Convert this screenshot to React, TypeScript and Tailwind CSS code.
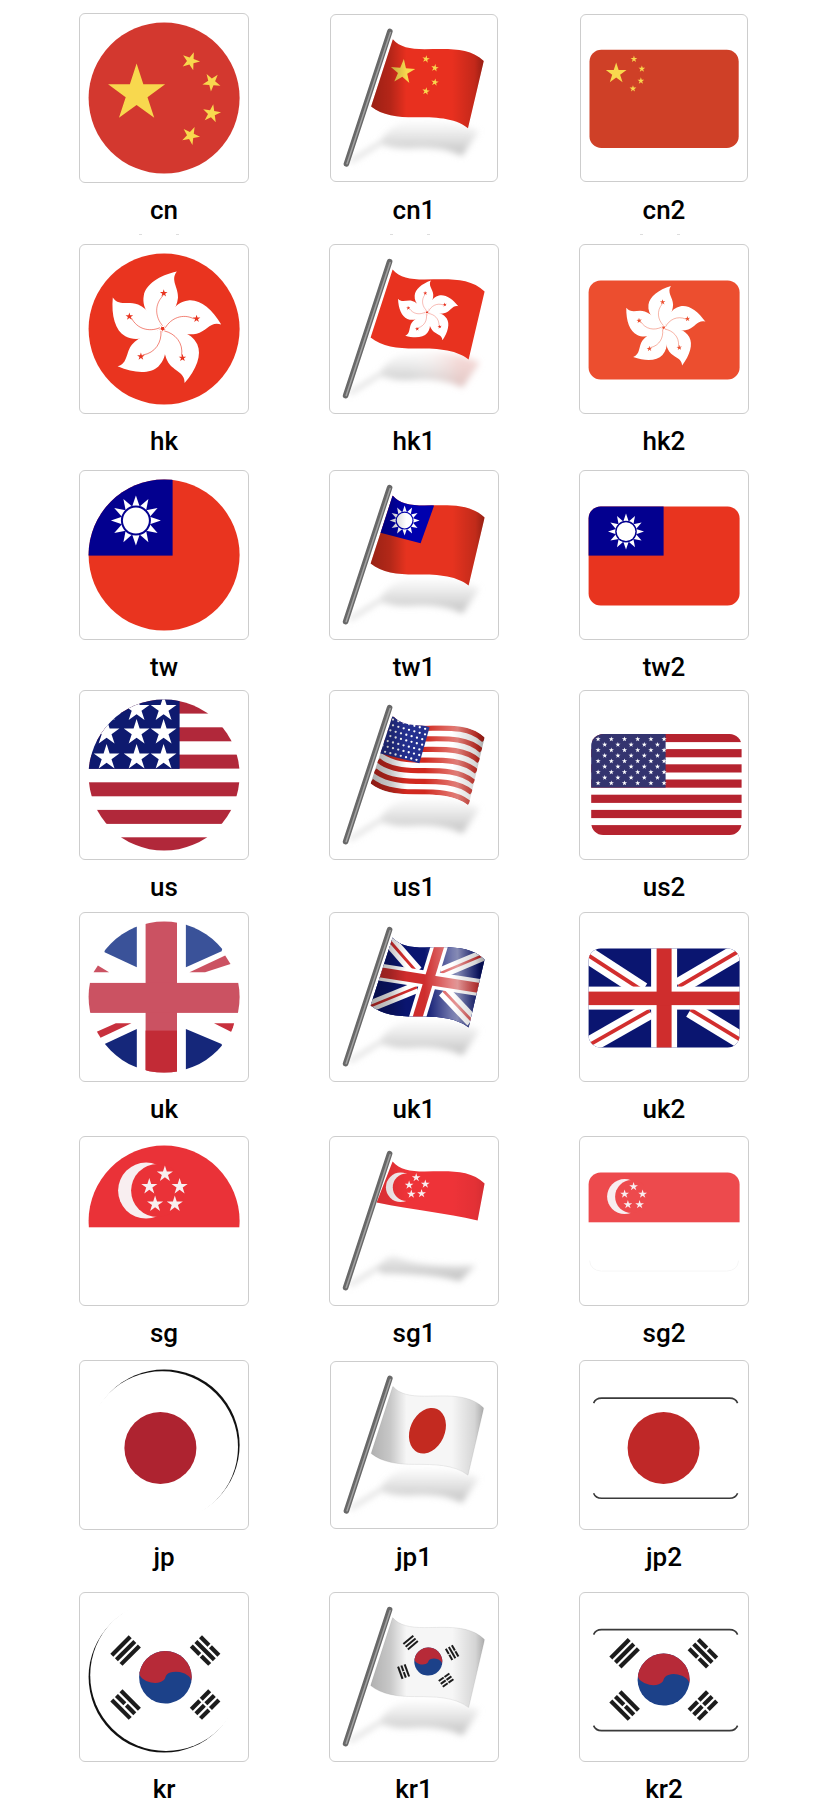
import React from "react";

type P = [number, number];

const starPts = (cx: number, cy: number, r: number, rot = 0) => {
  const out: string[] = [];
  for (let i = 0; i < 10; i++) {
    const rad = i % 2 === 0 ? r : r * 0.382;
    const a = ((rot + i * 36 - 90) * Math.PI) / 180;
    out.push(`${(cx + rad * Math.cos(a)).toFixed(2)},${(cy + rad * Math.sin(a)).toFixed(2)}`);
  }
  return out.join(" ");
};

const Star = ({ cx, cy, r, fill, rot = 0 }: { cx: number; cy: number; r: number; fill: string; rot?: number }) => (
  <polygon points={starPts(cx, cy, r, rot)} fill={fill} />
);

const Bauhinia = ({ cx, cy, r, bg, rot = 0 }: { cx: number; cy: number; r: number; bg: string; rot?: number }) => (
  <g transform={`translate(${cx} ${cy}) rotate(${rot}) scale(${r / 100})`}>
    {[0, 1, 2, 3, 4].map((i) => (
      <g key={i} transform={`rotate(${i * 72})`}>
        <path d="M-1 -3 C-16 -14 -38 -32 -33 -58 C-29 -78 -6 -93 25 -100 C13 -85 28 -72 27 -54 C25 -34 10 -18 3 -3 Z" fill="#fff" />
        <path d="M0 -5 C-13 -20 -15 -42 1 -58" fill="none" stroke={bg} strokeWidth="1.2" opacity="0.8" />
        <Star cx={2} cy={-62} r={7} fill={bg} />
      </g>
    ))}
  </g>
);

const Sun = ({ cx, cy, r, navy }: { cx: number; cy: number; r: number; navy: string }) => (
  <g transform={`translate(${cx} ${cy}) scale(${r})`}>
    {Array.from({ length: 12 }).map((_, i) => (
      <polygon key={i} transform={`rotate(${i * 30})`} points="-0.15,-0.56 0.15,-0.56 0,-1" fill="#fff" />
    ))}
    <circle r="0.6" fill={navy} />
    <circle r="0.52" fill="#fff" />
  </g>
);

const Taegeuk = ({ cx, cy, r, rot = 11 }: { cx: number; cy: number; r: number; rot?: number }) => (
  <g transform={`translate(${cx} ${cy}) rotate(${rot}) scale(${r})`}>
    <circle r="1" fill="#1c4189" />
    <path d="M-1 0 A1 1 0 0 1 1 0 A.5 .3 0 0 0 0 0 A.5 .3 0 0 1 -1 0 Z" fill="#b72a38" />
  </g>
);

const Trigram = ({ cx, cy, rot, pat, len, t, g }: { cx: number; cy: number; rot: number; pat: number[]; len: number; t: number; g: number }) => (
  <g transform={`translate(${cx} ${cy}) rotate(${rot})`} fill="#1c1c1c">
    {pat.map((full, i) => {
      const y = (i - 1) * (t + g) - t / 2;
      return full ? (
        <rect key={i} x={-len / 2} y={y} width={len} height={t} />
      ) : (
        <g key={i}>
          <rect x={-len / 2} y={y} width={len / 2 - t * 0.25} height={t} />
          <rect x={t * 0.25} y={y} width={len / 2 - t * 0.25} height={t} />
        </g>
      );
    })}
  </g>
);

const jackArms: [number, number, number, number][] = [
  [-6, 3, 54, 42],
  [90, 38, 158, -2],
  [-4, 99, 61, 62],
  [102, 61, 158, 95],
];

const UnionJack = ({ bar = 15 }: { bar?: number }) => (
  <g>
    <rect x="-10" y="-10" width="171" height="119" fill="#0a1570" />
    {jackArms.map((a, i) => (
      <line key={i} x1={a[0]} y1={a[1]} x2={a[2]} y2={a[3]} stroke="#fff" strokeWidth="17" />
    ))}
    {jackArms.map((a, i) => (
      <line key={i} x1={a[0]} y1={a[1]} x2={a[2]} y2={a[3]} stroke="#d22e2e" strokeWidth="3.8" />
    ))}
    <rect x="62.5" y="-10" width="26" height="119" fill="#fff" />
    <rect x="-10" y="38" width="171" height="23" fill="#fff" />
    <rect x={75.5 - bar / 2} y="-10" width={bar} height="119" fill="#cf2d2d" />
    <rect x="-10" y="43" width="171" height="13.5" fill="#cf2d2d" />
  </g>
);

const T: P[] = [[63, 25], [70, 33], [80, 35], [95, 35], [115, 35], [140, 32], [155, 47]];
const B: P[] = [[41, 93], [52, 102], [68, 104], [85, 104], [105, 104], [125, 104], [139, 115]];
const lerp = (t: number) => T.map((p, i) => [p[0] + (B[i][0] - p[0]) * t, p[1] + (B[i][1] - p[1]) * t] as P);
const band = (t: number) => {
  const p = lerp(t).map((q) => `${q[0].toFixed(1)} ${q[1].toFixed(1)}`);
  return `M${p[0]} C${p[1]} ${p[2]} ${p[3]} C${p[4]} ${p[5]} ${p[6]}`;
};
const wavePath = "M63 25 C70 33 80 35 95 35 C115 35 140 32 155 47 L139 115 C125 104 105 104 85 104 C68 104 52 102 41 93 Z";
const sgPath = "M63 25 C70 33 80 35 95 35 C115 35 140 32 155 47 L148 84 C115 76 85 74 47 66 Z";
const shadowPath = "M50 130 C55 118 70 106 85 108 C105 106 130 108 150 118 L133 143 C118 136 105 135 90 135 C75 136 60 136 50 130 Z";
const sgShadow = "M48 132 C52 125 60 117 68 121 C90 130 120 130 146 129 L130 145 C112 138 70 137 52 137 Z";

const Wave = ({ id, base = "#e8301f", shade = 1, sg = false, tint, highlight = 0, edge, children }: {
  id: string; base?: string; shade?: number; sg?: boolean; tint?: string; highlight?: number; edge?: string; children?: React.ReactNode;
}) => {
  const path = sg ? sgPath : wavePath;
  return (
    <>
      <defs>
        <clipPath id={`${id}c`}><path d={path} /></clipPath>
        <linearGradient id={`${id}s`} gradientUnits="userSpaceOnUse" x1="40" y1="0" x2="155" y2="0">
          <stop offset="0" stopColor="#000" stopOpacity="0.34" />
          <stop offset="0.18" stopColor="#000" stopOpacity="0.22" />
          <stop offset="0.32" stopColor="#000" stopOpacity="0" />
          <stop offset="0.72" stopColor="#000" stopOpacity="0" />
          <stop offset="0.92" stopColor="#000" stopOpacity="0.16" />
          <stop offset="1" stopColor="#000" stopOpacity="0.36" />
        </linearGradient>
        <linearGradient id={`${id}h`} gradientUnits="userSpaceOnUse" x1="95" y1="0" x2="150" y2="0">
          <stop offset="0" stopColor="#fff" stopOpacity="0" />
          <stop offset="0.6" stopColor="#fff" stopOpacity="0.75" />
          <stop offset="1" stopColor="#fff" stopOpacity="0" />
        </linearGradient>
        <linearGradient id={`${id}b`} gradientUnits="userSpaceOnUse" x1="0" y1="105" x2="0" y2="140">
          <stop offset="0" stopColor="#d8d8d8" stopOpacity="0" />
          <stop offset="1" stopColor="#c6c6c6" stopOpacity="1" />
        </linearGradient>
        <linearGradient id={`${id}t`} gradientUnits="userSpaceOnUse" x1="80" y1="0" x2="130" y2="0">
          <stop offset="0" stopColor="#fff" stopOpacity="0" />
          <stop offset="1" stopColor={tint || "#fff"} stopOpacity="1" />
        </linearGradient>
        <filter id={`${id}f`} x="-20%" y="-40%" width="140%" height="180%"><feGaussianBlur stdDeviation="3" /></filter>
      </defs>
      <g filter={`url(#${id}f)`}>
        <path d={sg ? sgShadow : shadowPath} fill={`url(#${id}b)`} />
        {tint && <path d={shadowPath} fill={`url(#${id}t)`} opacity="0.6" />}
        <line x1="20" y1="149" x2="52" y2="129" stroke="#d4d4d4" strokeWidth="3" />
      </g>
      <path d={path} fill={base} stroke={edge} strokeWidth={edge ? 0.6 : 0} />
      <g clipPath={`url(#${id}c)`}>
        {children}
        {highlight > 0 && <rect x="30" y="15" width="130" height="105" fill={`url(#${id}h)`} opacity={highlight} />}
        <rect x="30" y="15" width="130" height="105" fill={`url(#${id}s)`} opacity={shade} />
      </g>
      <line x1="60" y1="17" x2="16" y2="151" stroke="#686868" strokeWidth="5.6" strokeLinecap="round" />
      <line x1="60.6" y1="18" x2="16.6" y2="151" stroke="#a2a2a2" strokeWidth="1.5" strokeLinecap="round" />
    </>
  );
};

const Round = ({ id, children }: { id: string; children: React.ReactNode }) => (
  <>
    <defs>
      <clipPath id={`${id}c`}><circle cx="84.5" cy="84.5" r="75.5" /></clipPath>
    </defs>
    <g clipPath={`url(#${id}c)`}>{children}</g>
  </>
);

const Rect = ({ id, y = 36, h = 99, x = 9, w = 151, r = 12, children }: { id: string; x?: number; y?: number; w?: number; h?: number; r?: number; children: React.ReactNode }) => (
  <>
    <defs>
      <clipPath id={`${id}c`}><rect x={x} y={y} width={w} height={h} rx={r} /></clipPath>
    </defs>
    <g clipPath={`url(#${id}c)`}>{children}</g>
  </>
);

const cY = "#f8d84e";

const Canton = ({ pts, fill }: { pts: P[]; fill: string }) => (
  <polygon points={pts.map((p) => p.join(",")).join(" ")} fill={fill} />
);

const usCorners: P[] = [[56, 24], [100, 36.7], [89.8, 72.7], [47, 62]];
const usDots = () => {
  const out: React.ReactNode[] = [];
  for (let j = 0; j < 7; j++) {
    for (let i = 0; i < 8; i++) {
      const u = (i + 0.5 + (j % 2 ? 0.25 : 0)) / 8.2;
      const v = (j + 0.5) / 7;
      const [a, b, c, d] = usCorners;
      const x = a[0] * (1 - u) * (1 - v) + b[0] * u * (1 - v) + c[0] * u * v + d[0] * (1 - u) * v;
      const y = a[1] * (1 - u) * (1 - v) + b[1] * u * (1 - v) + c[1] * u * v + d[1] * (1 - u) * v;
      out.push(<circle key={`${i}-${j}`} cx={x} cy={y} r="1.15" fill="#fff" />);
    }
  }
  return out;
};

const us2Stars = () => {
  const out: React.ReactNode[] = [];
  for (let j = 0; j < 9; j++) {
    const n = j % 2 ? 5 : 6;
    for (let i = 0; i < n; i++) {
      out.push(<Star key={`${i}-${j}`} cx={18.5 + (j % 2 ? 6.6 : 0) + i * 13.2} cy={48.5 + j * 5.5} r={2.7} fill="#fff" />);
    }
  }
  return out;
};

const ArcRound = ({ dx, dy, id }: { dx: number; dy: number; id: string }) => (
  <>
    <defs>
      <mask id={`${id}m`}>
        <rect width="169" height="169" fill="#fff" />
        <circle cx={84.5 + dx} cy={84.5 + dy} r="75.8" fill="#000" />
      </mask>
    </defs>
    <circle cx="84.5" cy="84.5" r="75.5" fill="#111" mask={`url(#${id}m)`} />
  </>
);

const RectLines = ({ y1, y2 }: { y1: number; y2: number }) => (
  <g fill="none" stroke="#3a3a3a" strokeWidth="1.6">
    <path d={`M14 ${y1 + 5} Q16 ${y1} 22 ${y1} L150 ${y1} Q156 ${y1} 158 ${y1 + 5}`} />
    <path d={`M14 ${y2 - 5} Q16 ${y2} 22 ${y2} L150 ${y2} Q156 ${y2} 158 ${y2 - 5}`} />
  </g>
);

const flags: Record<string, React.ReactNode> = {
  cn: (
    <Round id="cn">
      <rect width="169" height="169" fill="#d3382f" />
      <Star cx={57} cy={80} r={30} fill={cY} />
      <Star cx={111} cy={47.5} r={9.5} fill={cY} rot={20} />
      <Star cx={132} cy={68.5} r={9.5} fill={cY} rot={40} />
      <Star cx={132} cy={100} r={9.5} fill={cY} rot={10} />
      <Star cx={111} cy={122} r={9.5} fill={cY} rot={25} />
    </Round>
  ),
  cn1: (
    <Wave id="cn1">
      <Star cx={73} cy={58} r={13} fill={cY} rot={5} />
      <Star cx={96.5} cy={45} r={4} fill={cY} rot={10} />
      <Star cx={105.5} cy={54} r={4} fill={cY} rot={10} />
      <Star cx={105.5} cy={68.5} r={4} fill={cY} rot={10} />
      <Star cx={96.5} cy={77.5} r={4} fill={cY} rot={10} />
    </Wave>
  ),
  cn2: (
    <Rect id="cn2" y={35.5} h={99.5}>
      <rect width="169" height="169" fill="#cf4027" />
      <Star cx={36} cy={59.5} r={11} fill={cY} />
      <Star cx={54} cy={45} r={3.6} fill={cY} />
      <Star cx={62} cy={55} r={3.6} fill={cY} />
      <Star cx={61} cy={67} r={3.6} fill={cY} />
      <Star cx={53} cy={75} r={3.6} fill={cY} />
    </Rect>
  ),
  hk: (
    <Round id="hk">
      <rect width="169" height="169" fill="#e9341f" />
      <Bauhinia cx={83} cy={84} r={57} bg="#e9341f" />
    </Round>
  ),
  hk1: (
    <Wave id="hk1" base="#e8321f" shade={0} tint="#f6c9c5">
      <Bauhinia cx={97.4} cy={67.7} r={31} bg="#e8321f" rot={-7} />
    </Wave>
  ),
  hk2: (
    <Rect id="hk2">
      <rect width="169" height="169" fill="#ec4e2f" />
      <Bauhinia cx={84} cy={83} r={41} bg="#ec4e2f" rot={-4} />
    </Rect>
  ),
  tw: (
    <Round id="tw">
      <rect width="169" height="169" fill="#e9341f" />
      <rect width="93" height="85" fill="#03008f" />
      <Sun cx={56.3} cy={50} r={25} navy="#03008f" />
    </Round>
  ),
  tw1: (
    <Wave id="tw1" base="#e6331f">
      <Canton pts={[[55, 23], [104.5, 35], [91, 72.7], [46, 61]]} fill="#0000ae" />
      <Sun cx={75} cy={50} r={15} navy="#0000ae" />
    </Wave>
  ),
  tw2: (
    <Rect id="tw2">
      <rect width="169" height="169" fill="#e8341f" />
      <rect width="84" height="85" fill="#03008f" />
      <Sun cx={46.4} cy={61} r={18} navy="#03008f" />
    </Rect>
  ),
  us: (
    <Round id="us">
      {[9, 36.7, 64, 91.7, 119.3, 146.7].map((y) => (
        <rect key={y} y={y} width="169" height="14" fill="#b1283a" />
      ))}
      <rect width="100" height="78.3" fill="#0e1a6f" />
      {[84, 57].map((x) => <Star key={x} cx={x} cy={18.5} r={13.5} fill="#fff" />)}
      {[84, 57, 27].map((x) => <Star key={x} cx={x} cy={42} r={13.5} fill="#fff" />)}
      {[84, 57, 27].map((x) => <Star key={x} cx={x} cy={67} r={13.5} fill="#fff" />)}
      <Star cx={27} cy={18.5} r={13.5} fill="#fff" />
    </Round>
  ),
  us1: (
    <Wave id="us1" base="#fff" highlight={0.55}>
      {Array.from({ length: 13 }).map((_, i) =>
        i % 2 === 0 ? <path key={i} d={band((i + 0.5) / 13)} fill="none" stroke="#d1291f" strokeWidth="5.2" /> : null
      )}
      <Canton pts={usCorners} fill="#24308f" />
      {usDots()}
    </Wave>
  ),
  us2: (
    <Rect id="us2" x={11.6} y={43.3} w={150.4} h={101}>
      {Array.from({ length: 13 }).map((_, i) =>
        i % 2 === 0 ? <rect key={i} y={43.3 + i * 7.6} width="169" height={i === 12 ? 10 : 8.2} fill="#b5232f" /> : null
      )}
      <rect width="86" height="97" fill="#34346f" />
      {us2Stars()}
    </Rect>
  ),
  uk: (
    <Round id="uk">
      <g fill="#3a5299">
        <polygon points="25,39.7 20,10 57.2,10 57.2,54.7" />
        <polygon points="106.3,10 150,10 142,38.7 106.3,54.7" />
      </g>
      <g fill="#15277a">
        <polygon points="25,131.3 57.2,116.3 57.2,165 20,165" />
        <polygon points="106.3,116.3 142,131.3 150,165 106.3,165" />
      </g>
      <g fill="#cb5262">
        <polygon points="109.9,59.7 145.6,43 150.9,51.3 125.5,59.7" />
        <polygon points="13.9,59.7 29.5,59.7 18.3,53" />
      </g>
      <g fill="#c8303d">
        <polygon points="18.3,126.3 51.8,110.7 36.2,110.7 16,119.7" />
        <polygon points="134.4,110.7 154.5,110.7 152.3,119.7" />
      </g>
      <rect x="66" y="0" width="31.4" height="169" fill="#cb5262" />
      <rect x="0" y="70.3" width="169" height="30" fill="#cb5262" />
      <rect x="66" y="118" width="31.4" height="51" fill="#c22b36" />
    </Round>
  ),
  uk1: (
    <Wave id="uk1" base="#0a1570" highlight={0.7}>
      <g transform="matrix(0.64 0.1 -0.22 0.72 62 24)">
        <UnionJack />
      </g>
    </Wave>
  ),
  uk2: (
    <Rect id="uk2">
      <g transform="translate(9 36)">
        <UnionJack />
      </g>
    </Rect>
  ),
  sg: (
    <Round id="sg">
      <rect y="0" width="169" height="90.7" fill="#ea3238" />
      <circle cx="66.5" cy="54" r="28" fill="#f8eef0" />
      <circle cx="78" cy="54" r="26.5" fill="#ea3238" />
      <Star cx={85.3} cy={37.5} r={8.5} fill="#f8eef0" />
      <Star cx={69.7} cy={50} r={8.5} fill="#f8eef0" />
      <Star cx={100} cy={50} r={8.5} fill="#f8eef0" />
      <Star cx={75.5} cy={67.5} r={8.5} fill="#f8eef0" />
      <Star cx={95.2} cy={67.5} r={8.5} fill="#f8eef0" />
    </Round>
  ),
  sg1: (
    <Wave id="sg1" base="#ee3338" shade={0.3} sg>
      <circle cx="71" cy="50.7" r="14.7" fill="#f8eef0" />
      <circle cx="77" cy="50.7" r="13.8" fill="#ee3338" />
      <Star cx={86.6} cy={41} r={4.6} fill="#f8eef0" />
      <Star cx={79.5} cy={48.5} r={4.6} fill="#f8eef0" />
      <Star cx={95.7} cy={47.5} r={4.6} fill="#f8eef0" />
      <Star cx={81.7} cy={57.5} r={4.6} fill="#f8eef0" />
      <Star cx={92} cy={57} r={4.6} fill="#f8eef0" />
    </Wave>
  ),
  sg2: (
    <>
      <path d="M10 124 Q11 134 22 134.5 L147 134.5 Q158 134 159 124" fill="none" stroke="#f6f6f6" strokeWidth="1" />
      <Rect id="sg2">
        <rect width="169" height="85.7" fill="#ed4a4d" />
        <circle cx="45" cy="60" r="17.5" fill="#f8eef0" />
        <circle cx="52" cy="60" r="16.5" fill="#ed4a4d" />
        <Star cx={54} cy={50} r={4.6} fill="#f8eef0" />
        <Star cx={45} cy={57.5} r={4.6} fill="#f8eef0" />
        <Star cx={63} cy={57.5} r={4.6} fill="#f8eef0" />
        <Star cx={48.3} cy={68} r={4.6} fill="#f8eef0" />
        <Star cx={60} cy={68} r={4.6} fill="#f8eef0" />
      </Rect>
    </>
  ),
  jp: (
    <>
      <ArcRound id="jp" dx={-1.9} dy={1.9} />
      <circle cx="80.8" cy="87.3" r="36" fill="#ae2330" />
    </>
  ),
  jp1: (
    <Wave id="jp1" base="#f6f6f6" shade={0.85} edge="#dcdcdc">
      <ellipse cx="98" cy="70" rx="17.5" ry="24" transform="rotate(24 98 70)" fill="#c32a20" />
    </Wave>
  ),
  jp2: (
    <>
      <RectLines y1={37.5} y2={137.7} />
      <circle cx="84" cy="87.3" r="36" fill="#bf2828" />
    </>
  ),
  kr: (
    <>
      <ArcRound id="kr" dx={1.9} dy={-1.9} />
      <Taegeuk cx={85.8} cy={84.7} r={26.3} />
      <Trigram cx={46} cy={58} rot={-45} pat={[1, 1, 1]} len={26} t={4.2} g={2.3} />
      <Trigram cx={125.5} cy={58} rot={45} pat={[0, 1, 0]} len={26} t={4.2} g={2.3} />
      <Trigram cx={46} cy={112} rot={45} pat={[1, 0, 1]} len={26} t={4.2} g={2.3} />
      <Trigram cx={125.5} cy={112} rot={-45} pat={[0, 0, 0]} len={26} t={4.2} g={2.3} />
    </>
  ),
  kr1: (
    <Wave id="kr1" base="#f6f6f6" shade={0.85} edge="#dcdcdc">
      <Taegeuk cx={98.7} cy={69} r={14} />
      <Trigram cx={81} cy={50} rot={-40} pat={[1, 1, 1]} len={13} t={2} g={1.5} />
      <Trigram cx={122.5} cy={60} rot={60} pat={[0, 1, 0]} len={13} t={2} g={1.5} />
      <Trigram cx={74} cy={79} rot={70} pat={[1, 0, 1]} len={13} t={2} g={1.5} />
      <Trigram cx={116.5} cy={87.5} rot={-35} pat={[0, 0, 0]} len={13} t={2} g={1.5} />
    </Wave>
  ),
  kr2: (
    <>
      <RectLines y1={37} y2={138} />
      <Taegeuk cx={84} cy={87} r={26} />
      <Trigram cx={45} cy={60.7} rot={-45} pat={[1, 1, 1]} len={26} t={4.2} g={2.3} />
      <Trigram cx={123.3} cy={60.7} rot={45} pat={[0, 1, 0]} len={26} t={4.2} g={2.3} />
      <Trigram cx={45} cy={113} rot={45} pat={[1, 0, 1]} len={26} t={4.2} g={2.3} />
      <Trigram cx={123.3} cy={113} rot={-45} pat={[0, 0, 0]} len={26} t={4.2} g={2.3} />
    </>
  ),
};

const Cell = ({ name, small = false, specks = false }: { name: string; small?: boolean; specks?: boolean }) => (
  <div className="relative flex flex-col items-center">
    <div
      className={
        small
          ? "my-[1px] h-[168px] w-[168px] overflow-hidden rounded-[6px] border border-[#cdcdcd] bg-white"
          : "h-[170px] w-[170px] overflow-hidden rounded-[6px] border border-[#cdcdcd] bg-white"
      }
    >
      <svg viewBox="0.4 0.4 168 168" className="block h-full w-full blur-[0.4px]">
        {flags[name]}
      </svg>
    </div>
    <div className="pt-[11px] text-center font-['Roboto',sans-serif] text-[26px] leading-[32px] font-medium text-black">{name}</div>
    {specks && (
      <>
        <div className="absolute top-[221px] left-[60px] h-px w-[3px] bg-[#dddddd]" />
        <div className="absolute top-[221px] left-[97px] h-px w-[3px] bg-[#dddddd]" />
      </>
    )}
  </div>
);

const Row = ({ className, names, small = [], specks = false }: { className: string; names: string[]; small?: string[]; specks?: boolean }) => (
  <div className={`grid grid-cols-3 justify-items-center ${className}`}>
    {names.map((n) => (
      <Cell key={n} name={n} small={small.includes(n)} specks={specks} />
    ))}
  </div>
);

export default function App() {
  return (
    <div className="min-h-[1810px] bg-white px-[39px]">
      <div className="h-[13px]" />
      <Row className="" names={["cn", "cn1", "cn2"]} small={["cn1", "cn2"]} specks />
      <Row className="mt-[18px]" names={["hk", "hk1", "hk2"]} />
      <Row className="mt-[13px]" names={["tw", "tw1", "tw2"]} />
      <Row className="mt-[7px]" names={["us", "us1", "us2"]} />
      <Row className="mt-[9px]" names={["uk", "uk1", "uk2"]} />
      <Row className="mt-[11px]" names={["sg", "sg1", "sg2"]} />
      <Row className="mt-[11px]" names={["jp", "jp1", "jp2"]} small={["jp1"]} />
      <Row className="mt-[19px]" names={["kr", "kr1", "kr2"]} />
    </div>
  );
}
